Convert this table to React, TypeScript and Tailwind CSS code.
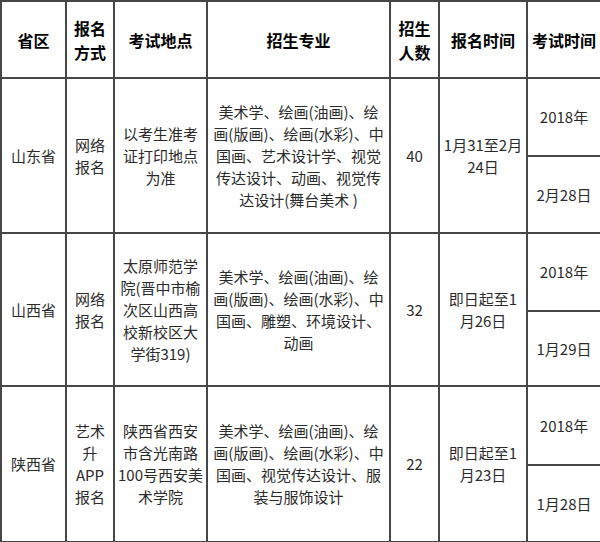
import React from 'react';

const cell = 'border-2 border-[#474747] text-center align-middle p-0';

type Row = {
  province: string;
  method: string[];
  place: string[];
  majors: string[];
  count: string;
  signup: string[];
  exam: string;
  h1: string;
  h2: string;
};

const rows: Row[] = [
  {
    province: '山东省',
    method: ['网络', '报名'],
    place: ['以考生准考', '证打印地点', '为准'],
    majors: ['美术学、绘画(油画)、绘', '画(版画)、绘画(水彩)、中', '国画、艺术设计学、视觉', '传达设计、动画、视觉传', '达设计(舞台美术 )'],
    count: '40',
    signup: ['1月31至2月', '24日'],
    exam: '2月28日',
    h1: 'h-[78px]',
    h2: 'h-[77px]',
  },
  {
    province: '山西省',
    method: ['网络', '报名'],
    place: ['太原师范学', '院(晋中市榆', '次区山西高', '校新校区大', '学街319)'],
    majors: ['美术学、绘画(油画)、绘', '画(版画)、绘画(水彩)、中', '国画、雕塑、环境设计、', '动画'],
    count: '32',
    signup: ['即日起至1', '月26日'],
    exam: '1月29日',
    h1: 'h-[78px]',
    h2: 'h-[75px]',
  },
  {
    province: '陕西省',
    method: ['艺术', '升', 'APP', '报名'],
    place: ['陕西省西安', '市含光南路', '100号西安美', '术学院'],
    majors: ['美术学、绘画(油画)、绘', '画(版画)、绘画(水彩)、中', '国画、视觉传达设计、服', '装与服饰设计'],
    count: '22',
    signup: ['即日起至1', '月23日'],
    exam: '1月28日',
    h1: 'h-[79px]',
    h2: 'h-[77px]',
  },
];

const Lines: React.FC<{ items: string[] }> = ({ items }) => (
  <>
    {items.map((t, i) => (
      <div key={i} className="whitespace-nowrap">
        {t}
      </div>
    ))}
  </>
);

export default function App() {
  return (
    <div
      className="w-[600px] h-[542px] bg-white overflow-hidden"
      style={{ fontFamily: '"Noto Sans CJK SC", "Noto Sans", sans-serif' }}
    >
      <table className="w-[600px] table-fixed border-collapse text-[15px] leading-[22px] text-[#2b2b2b]">
        <colgroup>
          <col className="w-[65px]" />
          <col className="w-[48px]" />
          <col className="w-[93px]" />
          <col className="w-[183px]" />
          <col className="w-[49px]" />
          <col className="w-[88px]" />
          <col className="w-[74px]" />
        </colgroup>
        <thead>
          <tr className="h-[77px] text-[16px] leading-[24px] font-bold text-black">
            <th className={cell}>省区</th>
            <th className={cell}>
              <Lines items={['报名', '方式']} />
            </th>
            <th className={cell}>考试地点</th>
            <th className={cell}>招生专业</th>
            <th className={cell}>
              <Lines items={['招生', '人数']} />
            </th>
            <th className={cell}>报名时间</th>
            <th className={cell}>考试时间</th>
          </tr>
        </thead>
        <tbody>
          {rows.map((r) => (
            <React.Fragment key={r.province}>
              <tr className={r.h1}>
                <td rowSpan={2} className={cell}>
                  {r.province}
                </td>
                <td rowSpan={2} className={cell}>
                  <Lines items={r.method} />
                </td>
                <td rowSpan={2} className={cell}>
                  <Lines items={r.place} />
                </td>
                <td rowSpan={2} className={cell}>
                  <Lines items={r.majors} />
                </td>
                <td rowSpan={2} className={cell}>
                  {r.count}
                </td>
                <td rowSpan={2} className={cell}>
                  <Lines items={r.signup} />
                </td>
                <td className={cell}>2018年</td>
              </tr>
              <tr className={r.h2}>
                <td className={cell}>{r.exam}</td>
              </tr>
            </React.Fragment>
          ))}
        </tbody>
      </table>
    </div>
  );
}
